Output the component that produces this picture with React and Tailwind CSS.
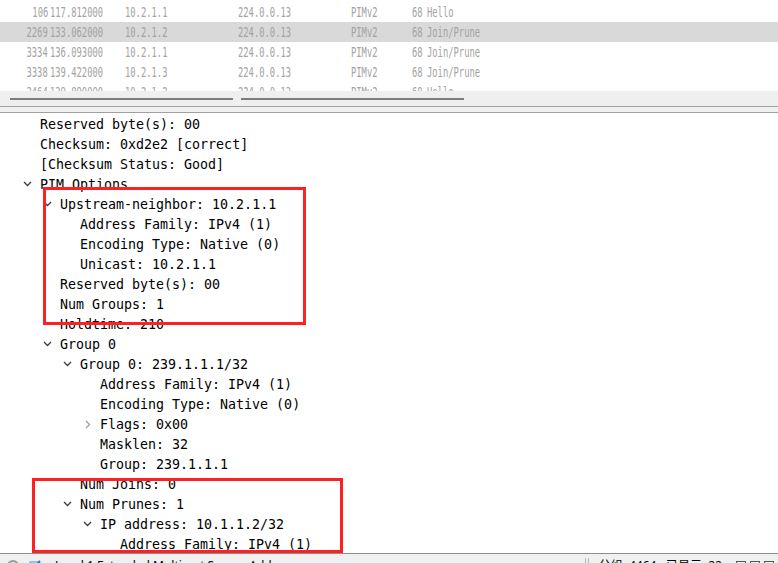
import React from 'react';

const PACKETS = [
  { no: '106', time: '117.812000', src: '10.2.1.1', dst: '224.0.0.13', proto: 'PIMv2', len: '68', info: 'Hello' },
  { no: '2269', time: '133.062000', src: '10.2.1.2', dst: '224.0.0.13', proto: 'PIMv2', len: '68', info: 'Join/Prune', selected: true },
  { no: '3334', time: '136.093000', src: '10.2.1.1', dst: '224.0.0.13', proto: 'PIMv2', len: '68', info: 'Join/Prune' },
  { no: '3338', time: '139.422000', src: '10.2.1.3', dst: '224.0.0.13', proto: 'PIMv2', len: '68', info: 'Join/Prune' },
  { no: '3464', time: '139.890000', src: '10.2.1.2', dst: '224.0.0.13', proto: 'PIMv2', len: '68', info: 'Hello' },
];

// lvl = tree depth, open = expanded, closed = collapsed child
const TREE = [
  { lvl: 0, text: 'Reserved byte(s): 00' },
  { lvl: 0, text: 'Checksum: 0xd2e2 [correct]' },
  { lvl: 0, text: '[Checksum Status: Good]' },
  { lvl: 0, text: 'PIM Options', open: true },
  { lvl: 1, text: 'Upstream-neighbor: 10.2.1.1', open: true },
  { lvl: 2, text: 'Address Family: IPv4 (1)' },
  { lvl: 2, text: 'Encoding Type: Native (0)' },
  { lvl: 2, text: 'Unicast: 10.2.1.1' },
  { lvl: 1, text: 'Reserved byte(s): 00' },
  { lvl: 1, text: 'Num Groups: 1' },
  { lvl: 1, text: 'Holdtime: 210' },
  { lvl: 1, text: 'Group 0', open: true },
  { lvl: 2, text: 'Group 0: 239.1.1.1/32', open: true },
  { lvl: 3, text: 'Address Family: IPv4 (1)' },
  { lvl: 3, text: 'Encoding Type: Native (0)' },
  { lvl: 3, text: 'Flags: 0x00', closed: true },
  { lvl: 3, text: 'Masklen: 32' },
  { lvl: 3, text: 'Group: 239.1.1.1' },
  { lvl: 2, text: 'Num Joins: 0' },
  { lvl: 2, text: 'Num Prunes: 1', open: true },
  { lvl: 3, text: 'IP address: 10.1.1.2/32', open: true },
  { lvl: 4, text: 'Address Family: IPv4 (1)' },
];

const INDENT = ['w-[23px]', 'w-[43px]', 'w-[63px]', 'w-[83px]', 'w-[103px]'];

function Cell({ w, right, children }) {
  return (
    <div className={`${w} shrink-0 whitespace-nowrap ${right ? 'flex justify-end' : ''}`}>
      <span className={`inline-block [transform:scaleX(0.63)] ${right ? 'origin-right' : 'origin-left'}`}>{children}</span>
    </div>
  );
}

function PacketList() {
  return (
    <div className="h-[91px] overflow-hidden pt-[2px] text-[#a3a3a3] text-[14px]" style={{ fontFamily: '"DejaVu Sans Mono", monospace' }}>
      {PACKETS.map((p) => (
        <div key={p.no} className={`h-5 flex items-center ${p.selected ? 'bg-[#d9d9d9]' : ''}`}>
          <Cell w="w-[48px]" right>{p.no}</Cell>
          <div className="w-[2px]" />
          <Cell w="w-[75px]">{p.time}</Cell>
          <Cell w="w-[113px]">{p.src}</Cell>
          <Cell w="w-[113px]">{p.dst}</Cell>
          <Cell w="w-[61px]">{p.proto}</Cell>
          <Cell w="w-[15px]">{p.len}</Cell>
          <Cell w="w-[200px]">{p.info}</Cell>
        </div>
      ))}
    </div>
  );
}

function Chevron({ open, closed }) {
  if (closed) {
    return (
      <svg width="6" height="9" viewBox="0 0 6 9" className="ml-[2px] -mt-[1px]">
        <polyline points="1,1 4.5,4.5 1,8" fill="none" stroke="#a0a0a0" strokeWidth="1.3" />
      </svg>
    );
  }
  if (open) {
    return (
      <svg width="9" height="6" viewBox="0 0 9 6" className="-mt-[3px]">
        <polyline points="1,1 4.5,4.5 8,1" fill="none" stroke="#3c3c3c" strokeWidth="1.3" />
      </svg>
    );
  }
  return null;
}

function DetailTree() {
  return (
    <div className="h-[440px] overflow-hidden bg-white pt-[2px] text-black text-[13.3px] leading-5" style={{ fontFamily: '"DejaVu Sans Mono", monospace' }}>
      {TREE.map((row, i) => (
        <div key={i} className="h-5 flex items-center whitespace-nowrap">
          <div className={`${INDENT[row.lvl]} shrink-0`} />
          <div className="w-[17px] shrink-0 flex items-center">
            <Chevron open={row.open} closed={row.closed} />
          </div>
          <span>{row.text}</span>
        </div>
      ))}
    </div>
  );
}

function StatusBar() {
  return (
    <div className="h-[24px] border-t border-[#8c8c8c] bg-[#f0f0f0] flex items-center text-[12px] text-black" style={{ fontFamily: '"Noto Sans", "Noto Sans CJK SC", sans-serif' }}>
      <div className="ml-[7px] w-[12px] h-[12px] rounded-full border-2 border-[#9a9a9a] bg-[#e6e6e6]" />
      <svg width="12" height="12" viewBox="0 0 12 12" className="ml-[10px]">
        <rect x="1" y="2" width="8" height="9" fill="#ffffff" stroke="#5b87c5" />
        <path d="M5 8 L11 1" stroke="#2f6fc0" strokeWidth="2" />
      </svg>
      <span className="ml-[14px]">Level 1 Extended Multicast Source Address</span>
      <div className="ml-auto flex items-center">
        <div className="w-[4px] h-[16px] border-x border-[#b4b4b4]" />
        <span className="ml-[10px]">分组: 4464 · 已显示: 22</span>
        <div className="ml-[14px] flex gap-[4px] mr-[4px]">
          <div className="w-[10px] h-[10px] border border-[#555]" />
          <div className="w-[10px] h-[10px] border border-[#555]" />
          <div className="w-[10px] h-[10px] border border-[#555]" />
        </div>
      </div>
    </div>
  );
}

export default function App() {
  return (
    <div className="relative w-[778px] h-[563px] overflow-hidden bg-white">
      <PacketList />
      {/* horizontal scrollbar */}
      <div className="h-[15px] bg-[#efefef] flex items-center pl-[10px] gap-[8px]">
        <div className="w-[223px] h-[2px] bg-[#7d7d7d]" />
        <div className="w-[223px] h-[2px] bg-[#7d7d7d]" />
      </div>
      <div className="h-px bg-[#a0a0a0]" />
      <div className="h-[5px] bg-[#f0f0f0]" />
      <div className="h-px bg-[#a0a0a0]" />
      <DetailTree />
      <StatusBar />

      {/* annotation boxes */}
      <div className="absolute left-[43px] top-[187px] w-[263px] h-[138px] border-[3px] border-[#ff2121]" />
      <div className="absolute left-[32px] top-[478px] w-[311px] h-[75px] border-[3px] border-[#ff2121]" />
    </div>
  );
}
